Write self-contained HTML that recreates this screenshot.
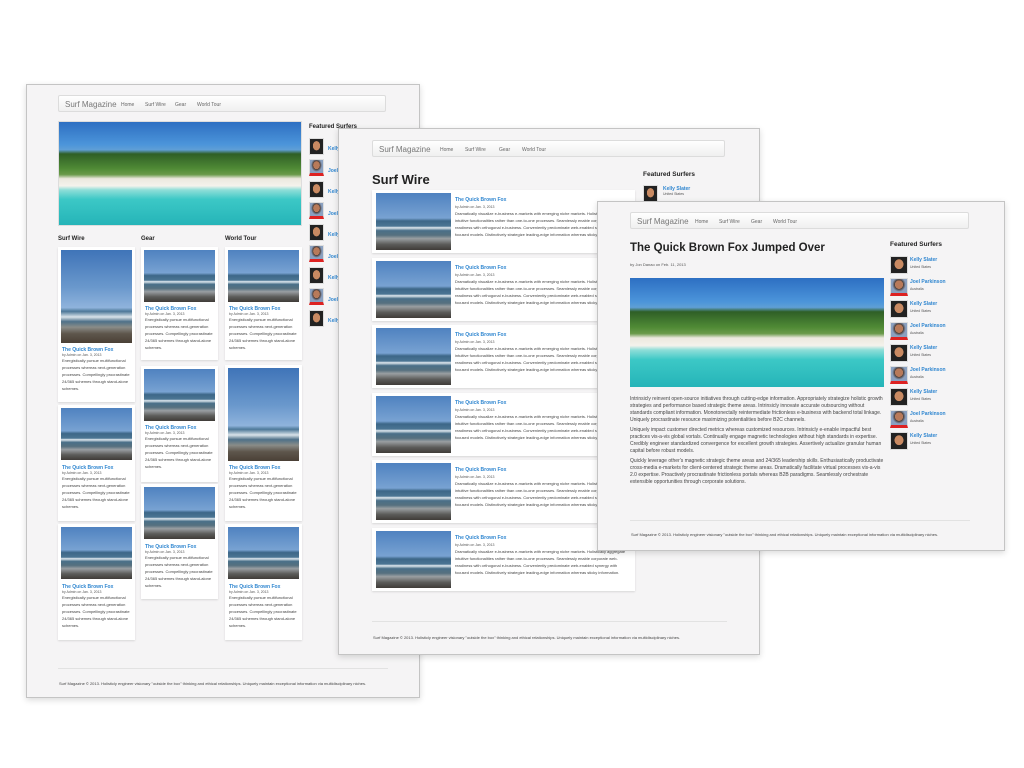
<!DOCTYPE html>
<html><head><meta charset="utf-8"><style>
*{margin:0;padding:0;box-sizing:border-box}
body{width:1024px;height:768px;background:#fff;position:relative;overflow:hidden;font-family:"Liberation Sans",sans-serif;color:#333}
.p{position:absolute;background:#f5f4f5;border:1px solid #c4c4c4;box-shadow:0 2px 6px rgba(0,0,0,.15)}
.nav{position:absolute;background:linear-gradient(#fff,#f0f0f0);border:1px solid #dcdcdc;border-radius:2px;height:17px;font-size:5px;color:#666;white-space:nowrap}
.nav b{font-weight:normal;font-size:8px;color:#777;position:absolute;left:6px;top:4px}
.nav span{position:absolute;top:6px}
.a{position:absolute}
.beach{background:linear-gradient(#2d6fc2 0%,#4c95da 22%,#5f9fd6 27%,#2f5f26 31%,#4f8a35 45%,#6a9a4a 51%,#ece8de 55%,#f4f2ec 62%,#8fded8 66%,#3cc8c6 75%,#25b4b8 100%)}
.wave{background:linear-gradient(#4f82c0 0%,#78a2d2 44%,#3d6788 49%,#4b7593 58%,#dfe8ee 61%,#4a6f88 66%,#56707f 74%,#9a9fa2 80%,#5c5c5a 90%,#403c38 100%)}
.tall{background:linear-gradient(#3f74b8 0%,#6a98cc 40%,#8fb3dc 62%,#4d7898 66%,#d9e3ea 72%,#4e7088 77%,#8a8c88 83%,#5e564c 90%,#4a4036 100%)}
.card{position:absolute;background:#fff;box-shadow:0 1px 2px rgba(0,0,0,.12)}
.card .im{position:absolute;left:3px;top:3px;right:3px}
.t{color:#2f86d0;font-weight:bold;font-size:5px;white-space:nowrap}
.m{font-size:3.5px;color:#555;white-space:nowrap}
.x{font-size:4px;line-height:7px;color:#444}
.av{position:absolute;width:15px;height:17px;background:radial-gradient(ellipse at 50% 45%,#c98a62 0 38%,#222 41%);border:1px solid #ddd}
.av.j{background:radial-gradient(ellipse at 50% 40%,#b87a5a 0 35%,#4a3a33 37%,#8aa0c0 60%);border-bottom:3px solid #d22}
.h{position:absolute;font-weight:bold;white-space:nowrap;color:#222}
.f{position:absolute;font-size:4px;color:#444;white-space:nowrap}
.hr{position:absolute;height:1px;background:#e2e2e2}
</style></head><body>

<!-- Panel A -->
<div class="p" style="left:26px;top:84px;width:394px;height:614px"></div>
<div class="nav" style="left:58px;top:95px;width:328px"><b>Surf Magazine</b><span style="left:62px">Home</span><span style="left:86px">Surf Wire</span><span style="left:116px">Gear</span><span style="left:138px">World Tour</span></div>
<div class="a beach" style="left:58px;top:121px;width:244px;height:105px;border:1px solid #ddd"></div>
<div class="h" style="left:309px;top:124px;font-size:6px">Featured Surfers</div>
<div class="a" style="left:309px;top:138px">
<div class="av" style="top:0"></div><div class="av j" style="top:21px"></div><div class="av" style="top:43px"></div><div class="av j" style="top:64px"></div><div class="av" style="top:86px"></div><div class="av j" style="top:107px"></div><div class="av" style="top:129px"></div><div class="av j" style="top:150px"></div><div class="av" style="top:172px"></div>
</div>
<div class="a" style="left:328px;top:139px;font-size:5px;line-height:21.5px;color:#2f86d0;font-weight:bold">Kelly<br>Joel<br>Kelly<br>Joel<br>Kelly<br>Joel<br>Kelly<br>Joel<br>Kelly</div>
<div class="h" style="left:58px;top:236px;font-size:6px">Surf Wire</div>
<div class="h" style="left:141px;top:236px;font-size:6px">Gear</div>
<div class="h" style="left:225px;top:236px;font-size:6px">World Tour</div>

<div class="card" style="left:58px;top:247px;width:77px;height:155px"><div class="im tall" style="height:93px"></div><div class="a" style="left:4px;top:100px"><div class="t">The Quick Brown Fox</div><div class="m">by Admin on Jan. 3, 2013</div><div class="x">Energistically pursue multifunctional<br>processes whereas next-generation<br>processes. Compellingly procrastinate<br>24/365 schemes through stand-alone<br>schemes.</div></div></div>
<div class="card" style="left:58px;top:405px;width:77px;height:116px"><div class="im wave" style="height:52px"></div><div class="a" style="left:4px;top:60px"><div class="t">The Quick Brown Fox</div><div class="m">by Admin on Jan. 3, 2013</div><div class="x">Energistically pursue multifunctional<br>processes whereas next-generation<br>processes. Compellingly procrastinate<br>24/365 schemes through stand-alone<br>schemes.</div></div></div>
<div class="card" style="left:58px;top:524px;width:77px;height:116px"><div class="im wave" style="height:52px"></div><div class="a" style="left:4px;top:60px"><div class="t">The Quick Brown Fox</div><div class="m">by Admin on Jan. 3, 2013</div><div class="x">Energistically pursue multifunctional<br>processes whereas next-generation<br>processes. Compellingly procrastinate<br>24/365 schemes through stand-alone<br>schemes.</div></div></div>

<div class="card" style="left:141px;top:247px;width:77px;height:113px"><div class="im wave" style="height:52px"></div><div class="a" style="left:4px;top:59px"><div class="t">The Quick Brown Fox</div><div class="m">by Admin on Jan. 3, 2013</div><div class="x">Energistically pursue multifunctional<br>processes whereas next-generation<br>processes. Compellingly procrastinate<br>24/365 schemes through stand-alone<br>schemes.</div></div></div>
<div class="card" style="left:141px;top:366px;width:77px;height:116px"><div class="im wave" style="height:52px"></div><div class="a" style="left:4px;top:59px"><div class="t">The Quick Brown Fox</div><div class="m">by Admin on Jan. 3, 2013</div><div class="x">Energistically pursue multifunctional<br>processes whereas next-generation<br>processes. Compellingly procrastinate<br>24/365 schemes through stand-alone<br>schemes.</div></div></div>
<div class="card" style="left:141px;top:484px;width:77px;height:115px"><div class="im wave" style="height:52px"></div><div class="a" style="left:4px;top:60px"><div class="t">The Quick Brown Fox</div><div class="m">by Admin on Jan. 3, 2013</div><div class="x">Energistically pursue multifunctional<br>processes whereas next-generation<br>processes. Compellingly procrastinate<br>24/365 schemes through stand-alone<br>schemes.</div></div></div>

<div class="card" style="left:225px;top:247px;width:77px;height:113px"><div class="im wave" style="height:52px"></div><div class="a" style="left:4px;top:59px"><div class="t">The Quick Brown Fox</div><div class="m">by Admin on Jan. 3, 2013</div><div class="x">Energistically pursue multifunctional<br>processes whereas next-generation<br>processes. Compellingly procrastinate<br>24/365 schemes through stand-alone<br>schemes.</div></div></div>
<div class="card" style="left:225px;top:365px;width:77px;height:156px"><div class="im tall" style="height:93px"></div><div class="a" style="left:4px;top:100px"><div class="t">The Quick Brown Fox</div><div class="m">by Admin on Jan. 3, 2013</div><div class="x">Energistically pursue multifunctional<br>processes whereas next-generation<br>processes. Compellingly procrastinate<br>24/365 schemes through stand-alone<br>schemes.</div></div></div>
<div class="card" style="left:225px;top:524px;width:77px;height:116px"><div class="im wave" style="height:52px"></div><div class="a" style="left:4px;top:60px"><div class="t">The Quick Brown Fox</div><div class="m">by Admin on Jan. 3, 2013</div><div class="x">Energistically pursue multifunctional<br>processes whereas next-generation<br>processes. Compellingly procrastinate<br>24/365 schemes through stand-alone<br>schemes.</div></div></div>
<div class="hr" style="left:58px;top:668px;width:330px"></div>
<div class="f" style="left:59px;top:681px">Surf Magazine © 2013. Holisticly engineer visionary "outside the box" thinking and ethical relationships. Uniquely maintain exceptional information via multidisciplinary niches.</div>

<!-- Panel B -->
<div class="p" style="left:338px;top:128px;width:422px;height:527px"></div>
<div class="nav" style="left:372px;top:140px;width:353px"><b>Surf Magazine</b><span style="left:67px">Home</span><span style="left:92px">Surf Wire</span><span style="left:126px">Gear</span><span style="left:149px">World Tour</span></div>
<div class="h" style="left:372px;top:172px;font-size:13px">Surf Wire</div>
<div class="h" style="left:643px;top:171px;font-size:6.5px">Featured Surfers</div>
<div class="av" style="left:643px;top:185px"></div>
<div class="a" style="left:663px;top:186px"><div class="t">Kelly Slater</div><div class="m">United States</div></div>

<div id="bl"></div>
<script>
var s='',ys=[190,258,325,393,460,528];
for(var i=0;i<6;i++){s+='<div class="card" style="left:372px;top:'+ys[i]+'px;width:263px;height:63px"><div class="a wave" style="left:4px;top:3px;width:75px;height:57px"></div><div class="a" style="left:83px;top:7px;width:176px;overflow:hidden"><div class="t">The Quick Brown Fox</div><div class="m" style="margin:2px 0 1px">by Admin on Jan. 3, 2013</div><div class="x" style="white-space:nowrap">Dramatically visualize e-business e-markets with emerging niche markets. Holistically aggregate<br>intuitive functionalities rather than one-to-one processes. Seamlessly enable corporate web-<br>readiness with orthogonal e-business. Conveniently predominate web-enabled synergy with<br>focused models. Distinctively strategize leading-edge information whereas sticky information.</div></div></div>';}
document.getElementById('bl').outerHTML=s;
</script>
<div class="hr" style="left:372px;top:621px;width:355px"></div>
<div class="f" style="left:373px;top:635px">Surf Magazine © 2013. Holisticly engineer visionary "outside the box" thinking and ethical relationships. Uniquely maintain exceptional information via multidisciplinary niches.</div>

<!-- Panel C -->
<div class="p" style="left:597px;top:201px;width:408px;height:350px"></div>
<div class="nav" style="left:630px;top:212px;width:339px"><b>Surf Magazine</b><span style="left:64px">Home</span><span style="left:88px">Surf Wire</span><span style="left:120px">Gear</span><span style="left:142px">World Tour</span></div>
<div class="h" style="left:630px;top:242px;font-size:11.5px">The Quick Brown Fox Jumped Over</div>
<div class="m" style="position:absolute;left:630px;top:262px;font-size:4px">by Jon Danao on Feb. 11, 2013</div>
<div class="a beach" style="left:630px;top:278px;width:254px;height:109px"></div>
<div class="a x" style="left:630px;top:396px;width:256px;font-size:5px;line-height:7px;color:#444">
<p style="margin-bottom:3px">Intrinsicly reinvent open-source initiatives through cutting-edge information. Appropriately strategize holistic growth strategies and performance based strategic theme areas. Intrinsicly innovate accurate outsourcing without standards compliant information. Monotonectally reintermediate frictionless e-business with backend total linkage. Uniquely procrastinate resource maximizing potentialities before B2C channels.</p>
<p style="margin-bottom:3px">Uniquely impact customer directed metrics whereas customized resources. Intrinsicly e-enable impactful best practices vis-a-vis global vortals. Continually engage magnetic technologies without high standards in expertise. Credibly engineer standardized convergence for excellent growth strategies. Assertively actualize granular human capital before robust models.</p>
<p>Quickly leverage other's magnetic strategic theme areas and 24/365 leadership skills. Enthusiastically productivate cross-media e-markets for client-centered strategic theme areas. Dramatically facilitate virtual processes vis-a-vis 2.0 expertise. Proactively procrastinate frictionless portals whereas B2B paradigms. Seamlessly orchestrate extensible opportunities through corporate solutions.</p>
</div>
<div class="h" style="left:890px;top:241px;font-size:6.5px">Featured Surfers</div>
<div id="cl"></div>
<script>
var c='';for(var k=0;k<9;k++){var j=k%2;c+='<div class="av'+(j?' j':'')+'" style="left:890px;top:'+(256+k*22)+'px;width:18px;height:18px"></div><div class="a" style="left:910px;top:'+(257+k*22)+'px"><div class="t">'+(j?'Joel Parkinson':'Kelly Slater')+'</div><div class="m" style="margin-top:2px">'+(j?'Australia':'United States')+'</div></div>';}
document.getElementById('cl').outerHTML=c;
</script>
<div class="hr" style="left:630px;top:520px;width:340px"></div>
<div class="f" style="left:631px;top:532px">Surf Magazine © 2013. Holisticly engineer visionary "outside the box" thinking and ethical relationships. Uniquely maintain exceptional information via multidisciplinary niches.</div>
</body></html>
